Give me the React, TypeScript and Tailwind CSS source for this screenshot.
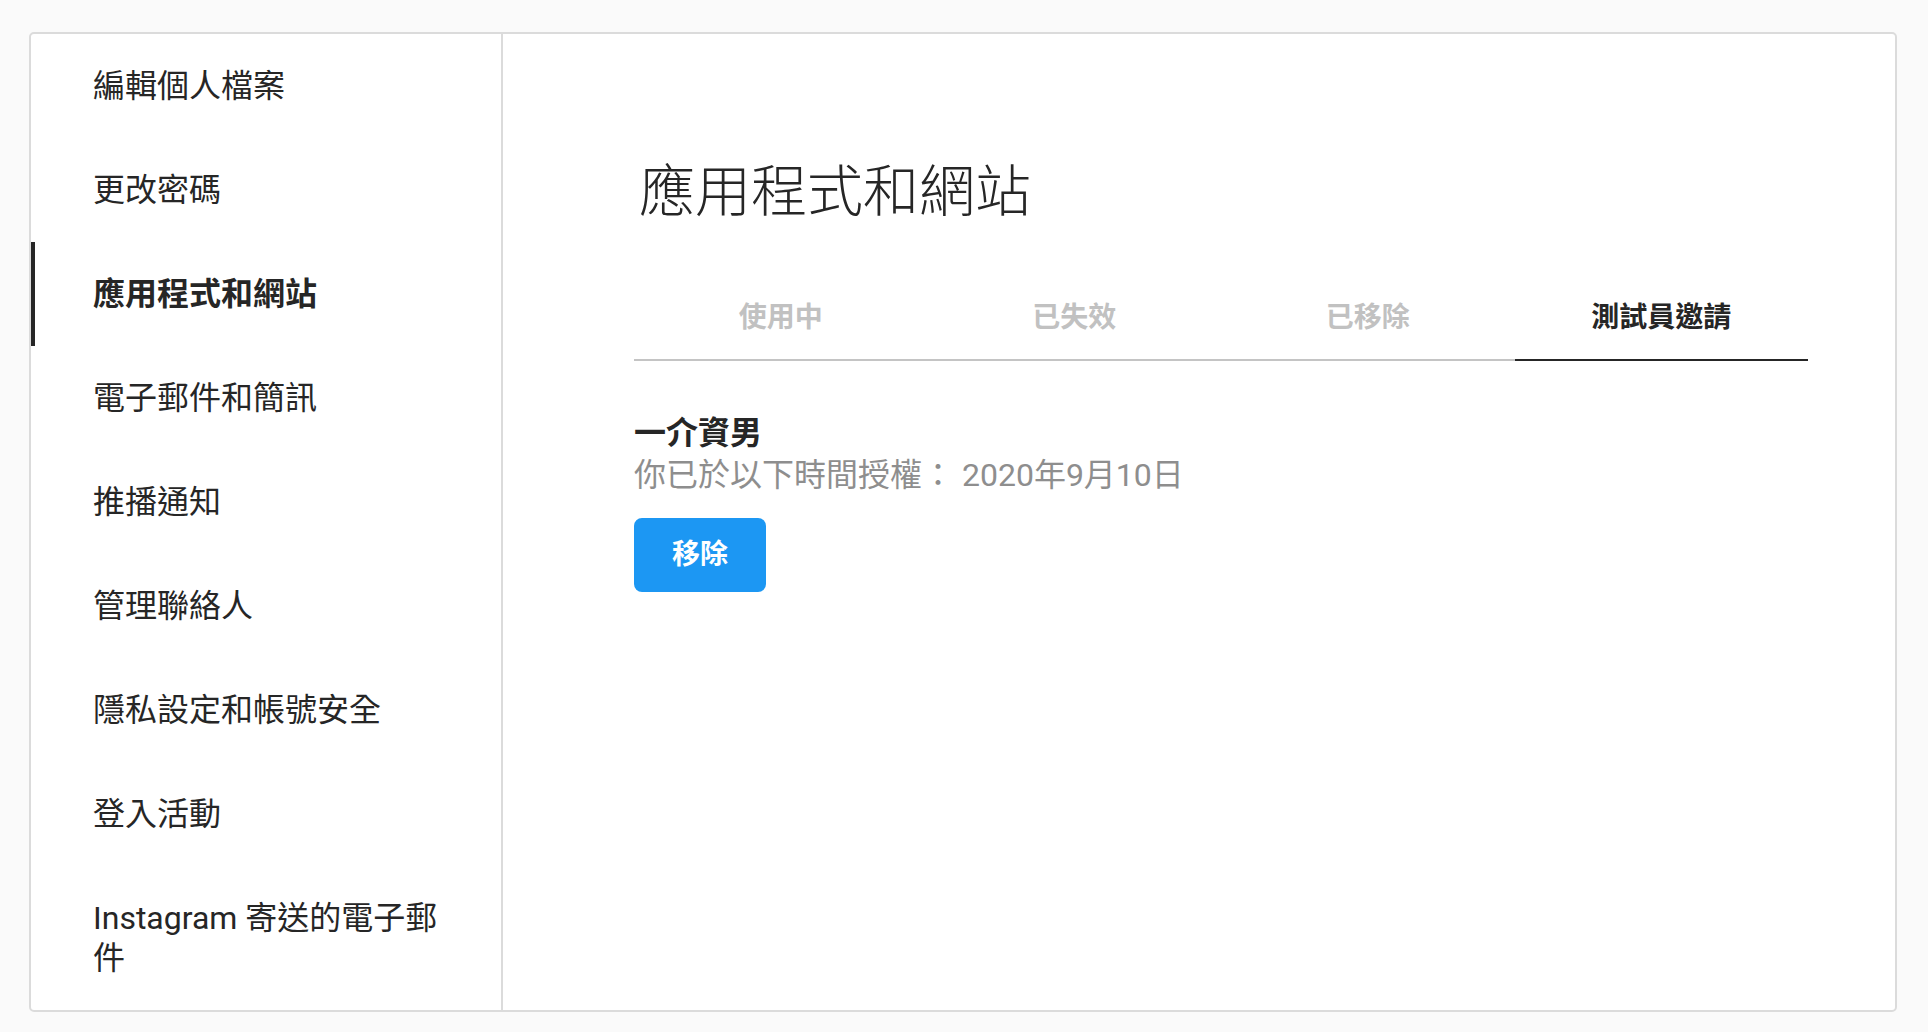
import React from 'react';

const font = {
  fontFamily: 'Roboto, "Noto Sans CJK TC", "Noto Sans", sans-serif',
};

const navItems = [
  '編輯個人檔案',
  '更改密碼',
  '應用程式和網站',
  '電子郵件和簡訊',
  '推播通知',
  '管理聯絡人',
  '隱私設定和帳號安全',
  '登入活動',
  'Instagram 寄送的電子郵件',
];

const tabs = ['使用中', '已失效', '已移除', '測試員邀請'];

function App() {
  const active = '應用程式和網站';
  const activeTab = '測試員邀請';

  return (
    <div className="min-h-screen bg-[#fafafa] pt-[32px] pl-[29px] text-[#262626]" style={font}>
      <div className="flex w-[1868px] bg-white border-2 border-[#dbdbdb] rounded-[5px]">
        {/* Sidebar */}
        <nav className="w-[472px] shrink-0 border-r-2 border-[#dbdbdb]">
          {navItems.map((item) => {
            const isActive = item === active;
            return (
              <a
                key={item}
                className={`block border-l-4 pl-[58px] pr-[32px] py-[32px] text-[32px] leading-[40px] ${
                  isActive ? 'border-[#262626] font-semibold' : 'border-transparent'
                }`}
              >
                {item}
              </a>
            );
          })}
        </nav>

        {/* Main content */}
        <main className="flex-1 pl-[131px] pr-[87px] pt-[126px]">
          <h1 className="pl-[5px] text-[56px] leading-[64px] font-light">應用程式和網站</h1>

          <div className="mt-[76px] flex border-b-2 border-[#c4c4c4]">
            {tabs.map((tab) => {
              const isActive = tab === activeTab;
              return (
                <button
                  key={tab}
                  className={`flex-1 text-center text-[28px] leading-[36px] font-semibold pb-[23px] ${
                    isActive
                      ? 'text-[#262626] border-b-2 border-[#262626] -mb-[2px]'
                      : 'text-[#c1c1c1]'
                  }`}
                >
                  {tab}
                </button>
              );
            })}
          </div>

          <div className="mt-[51px]">
            <div className="text-[32px] leading-[42px] font-bold">一介資男</div>
            <div className="text-[32px] leading-[42px] text-[#8e8e8e]">你已於以下時間授權： 2020年9月10日</div>
            <button className="mt-[22px] w-[132px] h-[74px] rounded-[8px] bg-[#1c97f3] text-white text-[28px] font-bold">
              移除
            </button>
          </div>
        </main>
      </div>
    </div>
  );
}

export default App;
